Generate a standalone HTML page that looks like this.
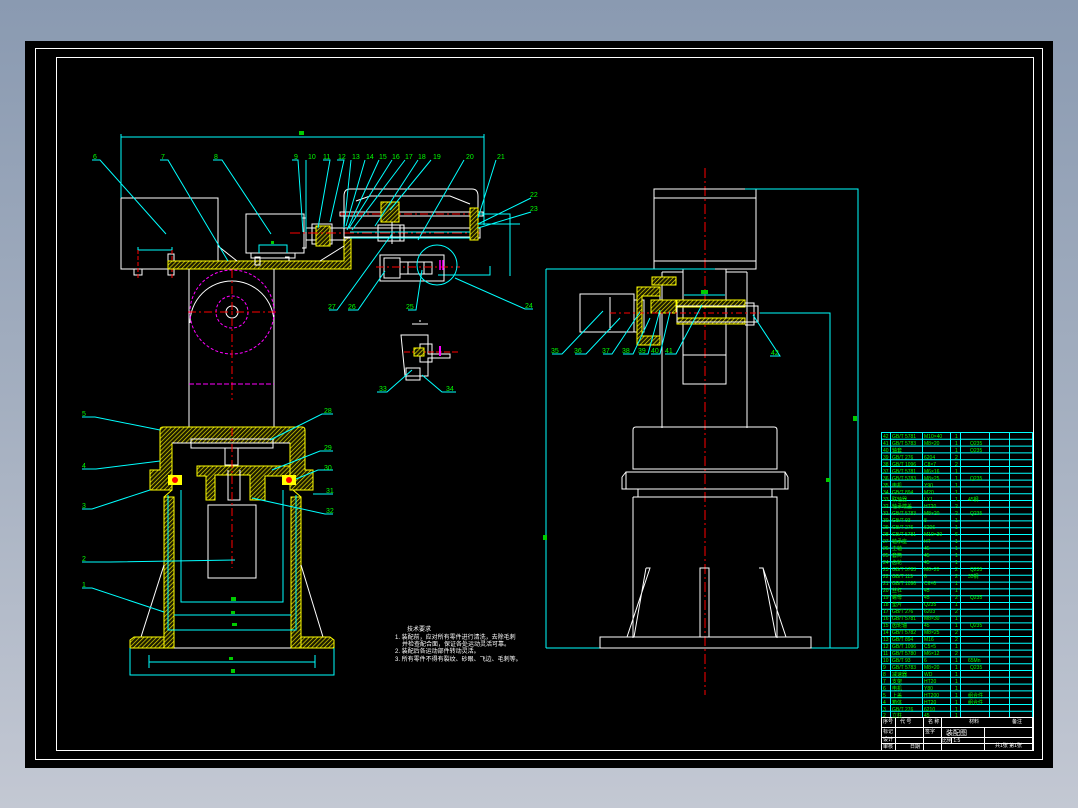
<!DOCTYPE html>
<html><head><meta charset="utf-8"><style>
html,body{margin:0;padding:0;width:1078px;height:808px;overflow:hidden;background:linear-gradient(#8a9ab1,#a4afc0 50%,#c3c8d3);}
svg{position:absolute;left:0;top:0}
text{font-family:"Liberation Sans","Noto Sans CJK SC",sans-serif;}
</style></head><body>
<svg width="1078" height="808" viewBox="0 0 1078 808">
<defs>
<pattern id="h" width="3" height="3" patternUnits="userSpaceOnUse" patternTransform="rotate(45)">
<rect width="3" height="3" fill="#1a1a00"/><line x1="0" y1="0" x2="0" y2="3" stroke="#e8e000" stroke-width="1.4"/></pattern>
</defs>
<rect x="25" y="41" width="1028" height="727" fill="#000"/>
<rect x="35.5" y="48.5" width="1007" height="711" fill="none" stroke="#fff" stroke-width="1"/>
<rect x="56.5" y="57.5" width="977" height="693" fill="none" stroke="#fff" stroke-width="1"/>

<!-- ===== LEFT VIEW ===== -->
<g fill="none" stroke-width="1">
<!-- top dim -->
<path d="M121 137H484 M121 134V265 M484 134V225" stroke="#0ff"/>
<rect x="299" y="131" width="5" height="4" fill="#0c0" stroke="none"/>
<!-- left box -->
<path d="M121 198H218V261 M121 198V269H168" stroke="#fff"/>
<path d="M138 250H172 M138 247V253 M172 247V253" stroke="#0ff"/>
<path d="M134 269v6h8v-6 M168 254h6v21h-6z" stroke="#fff"/>
<path d="M138 250V280 M172 250V280" stroke="#f00" stroke-dasharray="4 2"/>
<!-- plate -->
<path d="M168 261H344V238H351V269H168Z" fill="url(#h)" stroke="#ff0"/>
<path d="M218 246L237 261 M320 261L344 246" stroke="#fff"/>
<!-- motor 8 -->
<path d="M246 214H304V253H246Z M251 253V258H295V253 M255 257h5v8h-5z M285 257h4v4" stroke="#fff"/>
<path d="M259 253V245H287V253" stroke="#0ff"/>
<rect x="271" y="241" width="3" height="3" fill="#0c0" stroke="none"/>
<path d="M304 214V253 M302 218h4v30h-4" stroke="#fff"/>
<!-- coupling & gearbox -->
<path d="M306 228H346 M306 240H346 M312 224h20v20h-20z" stroke="#fff"/>
<rect x="316" y="226" width="14" height="20" fill="url(#h)" stroke="#ff0"/>
<path d="M290 233H480" stroke="#f00" stroke-dasharray="10 3 2 3"/>
<path d="M350 189H472Q478 189 478 196V237H344V196Q344 189 350 189Z" stroke="#fff"/>
<path d="M356 201L370 196H450L470 204 M340 212H483V216H340Z M344 228H480V238H344" stroke="#fff"/>
<path d="M340 214H483" stroke="#f00" stroke-dasharray="8 3 2 3"/>
<rect x="381" y="202" width="18" height="20" fill="url(#h)" stroke="#ff0"/>
<rect x="378" y="225" width="26" height="16" stroke="#fff"/>
<path d="M392 222V244 M400 225v16" stroke="#fff"/>
<rect x="470" y="208" width="8" height="32" fill="url(#h)" stroke="#ff0"/>
<path d="M350 232H470 M350 238H470 M478 214H510V276 M478 224H520 M438 275H490V266" stroke="#0ff"/>
<!-- lower motor -->
<path d="M380 255H444V281H380Z M384 258H400V278H384Z M400 262H432V274H400Z" stroke="#fff"/>
<rect x="408" y="262" width="16" height="12" fill="none" stroke="#fff"/>
<path d="M376 267H460" stroke="#f00" stroke-dasharray="8 3 2 3"/>
<circle cx="437" cy="265" r="20" stroke="#0ff"/>
<path d="M440 260v10 M443 260v10" stroke="#f0f" stroke-width="1.5"/>
<!-- column & wheel -->
<path d="M189 269V427 M274 269V427" stroke="#fff"/>
<path d="M190 323A42 42 0 0 1 274 323" stroke="#fff"/>
<circle cx="232" cy="312" r="42" stroke="#f0f" stroke-dasharray="3 2"/>
<circle cx="232" cy="312" r="16" stroke="#f0f" stroke-dasharray="3 2"/>
<circle cx="232" cy="312" r="6" stroke="#fff"/>
<path d="M188 312H276 M232 270V400" stroke="#f00" stroke-dasharray="8 3 2 3"/>
<path d="M189 384H274" stroke="#f0f" stroke-dasharray="5 2"/>
<!-- lower housing -->
<path d="M160 430Q160 427 163 427H302Q305 427 305 430V470H313V490H290V443H172V490H150V470H160Z" fill="url(#h)" stroke="#ff0"/>
<path d="M172 443H290" stroke="#fff"/>
<path d="M191 439H273V448H191Z M225 448H238V465H225Z" stroke="#fff"/>
<path d="M197 466H290V476H265V500H250V475H215V500H206V476H197Z" fill="url(#h)" stroke="#ff0"/>
<rect x="168" y="475" width="14" height="10" fill="#ff0" stroke="none"/>
<rect x="282" y="475" width="14" height="10" fill="#ff0" stroke="none"/>
<circle cx="175" cy="480" r="3" fill="#f00"/><circle cx="289" cy="480" r="3" fill="#f00"/>
<path d="M164 497H174V648H164Z M291 497H301V648H291Z" fill="url(#h)" stroke="#ff0"/>
<path d="M164 497L172 490 M301 497L293 490" stroke="#ff0"/>
<path d="M208 505H256V578H208Z M228 470V500H240V470" stroke="#fff"/>
<path d="M168 495V630H296V495 M181 490V602H283V490 M174 615H291" stroke="#0ff"/>
<path d="M232 428V568" stroke="#f00" stroke-dasharray="8 3 2 3"/>
<path d="M164 565L141 637 M301 565L323 637" stroke="#fff"/>
<path d="M130 640L134 637H164V648H130Z M301 637H330L334 640V648H301Z" fill="url(#h)" stroke="#ff0"/>
<path d="M174 648H291" stroke="#fff"/>
<path d="M130 648V675H334V648 M149 662H315 M149 655V668 M315 655V668" stroke="#0ff"/>
<rect x="229" y="657" width="4" height="3" fill="#0c0" stroke="none"/>
<rect x="231" y="669" width="4" height="4" fill="#0c0" stroke="none"/>
<rect x="231" y="597" width="5" height="4" fill="#0c0" stroke="none"/>
<rect x="231" y="611" width="4" height="3" fill="#0c0" stroke="none"/>
<rect x="232" y="623" width="5" height="3" fill="#0c0" stroke="none"/>
<!-- leaders lower left -->
<path d="M82 417H95L160 430 M82 469H96L160 461 M82 509H92L150 490 M82 562H110L235 560 M82 588H92L164 612" stroke="#0ff"/>
<path d="M333 414H322L270 440 M333 451H320L272 470 M333 470H318L296 479 M333 494H313 M333 514H325L252 498" stroke="#0ff"/>
<!-- small detail -->
<path d="M401 335H428V354H450V358H428V376H405Z M406 368H420V380H406Z M420 344H432V362H420Z" stroke="#fff"/>
<path d="M404 352H458" stroke="#f00" stroke-dasharray="6 2"/>
<rect x="414" y="348" width="10" height="8" fill="url(#h)" stroke="#ff0"/>
<path d="M440 346v10" stroke="#f0f" stroke-width="2"/>
<path d="M412 324H428 M420 322V320" stroke="#fff"/>
<path d="M377 392H387L412 370 M456 392H442L422 375" stroke="#0ff"/>
<!-- top leaders -->
<path d="M92 160H100L166 234 M160 160H168L228 261 M213 160H222L271 234 M292 160H298L303 232 M306 160V232 M323 160H330L318 228 M337 160H344L330 222 M351 160L344 228 M365 160L346 226 M379 160L347 230 M392 160L349 228 M405 160L352 230 M418 160L375 226 M431 160L390 210 M464 160L418 240 M496 160L478 218 M531 198L478 224 M531 212L478 228 M329 310H337L392 234 M348 310H358L385 271 M408 310H416L422 270 M533 309H525L455 278" stroke="#0ff"/>
</g>
<g fill="#0f0" font-size="7">
<text x="93" y="159">6</text><text x="161" y="159">7</text><text x="214" y="159">8</text><text x="294" y="159">9</text>
<text x="308" y="159">10</text><text x="323" y="159">11</text><text x="338" y="159">12</text><text x="352" y="159">13</text>
<text x="366" y="159">14</text><text x="379" y="159">15</text><text x="392" y="159">16</text><text x="405" y="159">17</text>
<text x="418" y="159">18</text><text x="433" y="159">19</text><text x="466" y="159">20</text><text x="497" y="159">21</text>
<text x="530" y="197">22</text><text x="530" y="211">23</text>
<text x="328" y="309">27</text><text x="348" y="309">26</text><text x="406" y="309">25</text><text x="525" y="308">24</text>
<text x="379" y="391">33</text><text x="446" y="391">34</text>
<text x="82" y="416">5</text><text x="82" y="468">4</text><text x="82" y="508">3</text><text x="82" y="561">2</text><text x="82" y="587">1</text>
<text x="324" y="413">28</text><text x="324" y="450">29</text><text x="324" y="470">30</text><text x="326" y="493">31</text><text x="326" y="513">32</text>
</g>
<g fill="#fff" font-size="6">
<text x="407" y="631">技术要求</text>
<text x="395" y="639">1. 装配前，应对所有零件进行清洗，去除毛刺</text>
<text x="402" y="646">并检查配合面，保证各处运动灵活可靠。</text>
<text x="395" y="653">2. 装配后各运动部件转动灵活。</text>
<text x="395" y="661">3. 所有零件不得有裂纹、砂眼、飞边、毛刺等。</text>
</g>

<!-- ===== RIGHT VIEW ===== -->
<g fill="none" stroke-width="1">
<path d="M705 168V695" stroke="#f00" stroke-dasharray="10 3 2 3"/>
<path d="M654 189H756V269H654Z M654 198H756 M654 261H756" stroke="#fff"/>
<path d="M683 269V384H726V269 M662 272H683 M726 272H747 M662 272V428 M747 272V428 M683 355H726" stroke="#fff"/>
<path d="M745 189H858V648 M760 313H830V648 M546 269H715 M546 269V648 M546 648H858" stroke="#0ff"/>
<path d="M580 294H634V332H580Z M610 297V330 M634 300H644V332H634 M644 289H660V345H644" stroke="#fff"/>
<path d="M637 287H660V296H642V336H660V345H637Z" fill="url(#h)" stroke="#ff0"/>
<path d="M652 277H676V285H652Z" fill="url(#h)" stroke="#ff0"/>
<path d="M651 300H676V313H651Z" fill="url(#h)" stroke="#ff0"/>
<path d="M677 300H745V307H677Z M677 318H745V324H677Z" fill="url(#h)" stroke="#ff0"/>
<path d="M677 306H758V322H677Z M745 303H754V325H745" stroke="#fff"/>
<path d="M610 313H760" stroke="#f00" stroke-dasharray="6 3 2 3"/>
<path d="M684 295H725" stroke="#0ff"/>
<rect x="701" y="290" width="7" height="4" fill="#0c0" stroke="none"/>
<path d="M552 354H562L603 311 M575 354H586L620 318 M603 354H612L640 312 M623 354H633L650 318 M639 354H648L660 310 M651 354H660L670 312 M665 354H676L702 305 M770 356H780L753 315" stroke="#0ff"/>
<path d="M633 430Q633 427 636 427H774Q777 427 777 430V469H633Z M626 472H785V489H626Z M622 477L626 472 M785 472L788 477 M622 477V489H788V477 M633 497H777V638 M633 497V638 M638 489V497 M772 489V497" stroke="#fff"/>
<path d="M600 637H811V648H600Z" stroke="#fff"/>
<path d="M646 568H650L627 637 M646 568L634 637 M759 568H763L786 637 M763 568L776 637 M700 568H709V637H700Z" stroke="#fff"/>
</g>
<g fill="#0f0" font-size="7">
<text x="551" y="353">35</text><text x="574" y="353">36</text><text x="602" y="353">37</text><text x="622" y="353">38</text>
<text x="638" y="353">39</text><text x="651" y="353">40</text><text x="665" y="353">41</text><text x="771" y="355">42</text>
</g>
<rect x="543" y="535" width="4" height="5" fill="#0c0"/><rect x="826" y="478" width="4" height="4" fill="#0c0"/><rect x="853" y="416" width="4" height="5" fill="#0c0"/>

<!-- ===== TABLE ===== -->
<g stroke="#0ff" stroke-width="1" fill="none">
<rect x="881.5" y="432.5" width="151" height="285"/>
<path d="M890.5 432V717 M922.5 432V717 M950.5 432V717 M960.5 432V717 M989.5 432V717 M1009.5 432V717"/>
<path d="M881 439.3H1033 M881 446.1H1033 M881 452.9H1033 M881 459.7H1033 M881 466.5H1033 M881 473.3H1033 M881 480.1H1033 M881 486.9H1033 M881 493.7H1033 M881 500.5H1033 M881 507.3H1033 M881 514.1H1033 M881 520.9H1033 M881 527.7H1033 M881 534.5H1033 M881 541.3H1033 M881 548.1H1033 M881 554.9H1033 M881 561.7H1033 M881 568.5H1033 M881 575.3H1033 M881 582.1H1033 M881 588.9H1033 M881 595.7H1033 M881 602.5H1033 M881 609.3H1033 M881 616.1H1033 M881 622.9H1033 M881 629.7H1033 M881 636.5H1033 M881 643.3H1033 M881 650.1H1033 M881 656.9H1033 M881 663.7H1033 M881 670.5H1033 M881 677.3H1033 M881 684.1H1033 M881 690.9H1033 M881 697.7H1033 M881 704.5H1033 M881 711.3H1033"/>
</g>
<g stroke="#fff" stroke-width="1" fill="none">
<rect x="881.5" y="717.5" width="151" height="33"/>
<path d="M881 727.5H1033 M881 737.5H941 M881 743.5H941 M941 737.5H1033 M941 743.5H1033 M895.5 717V751 M923.5 717V751 M941.5 717V751 M984.5 727V751 M951.5 737V743"/>
</g>
<g fill="#0f0" font-size="5">
<text x="883" y="438">42</text><text x="892" y="438">GB/T 5781</text><text x="924" y="438">M10×40</text><text x="955" y="438">1</text>
<text x="883" y="445">41</text><text x="892" y="445">GB/T 5783</text><text x="924" y="445">M8×20</text><text x="955" y="445">1</text><text x="970" y="445">Q235</text>
<text x="883" y="452">40</text><text x="892" y="452">轴套</text><text x="955" y="452">1</text><text x="970" y="452">Q235</text>
<text x="883" y="459">39</text><text x="892" y="459">GB/T 276</text><text x="924" y="459">6204</text><text x="955" y="459">2</text>
<text x="883" y="466">38</text><text x="892" y="466">GB/T 1096</text><text x="924" y="466">C8×7</text><text x="955" y="466">2</text>
<text x="883" y="473">37</text><text x="892" y="473">GB/T 5781</text><text x="924" y="473">M6×16</text><text x="955" y="473">1</text>
<text x="883" y="480">36</text><text x="892" y="480">GB/T 5783</text><text x="924" y="480">M8×25</text><text x="955" y="480">1</text><text x="970" y="480">Q235</text>
<text x="883" y="487">35</text><text x="892" y="487">电机</text><text x="924" y="487">Y90</text><text x="955" y="487">1</text>
<text x="883" y="494">34</text><text x="892" y="494">GB/T 894</text><text x="924" y="494">M20</text><text x="955" y="494">1</text>
<text x="883" y="501">33</text><text x="892" y="501">联轴器</text><text x="924" y="501">LX1</text><text x="955" y="501">1</text><text x="968" y="501">45钢</text>
<text x="883" y="508">32</text><text x="892" y="508">轴承端盖</text><text x="924" y="508">HT20</text><text x="955" y="508">2</text>
<text x="883" y="515">31</text><text x="892" y="515">GB/T 5783</text><text x="924" y="515">M8×20</text><text x="955" y="515">2</text><text x="970" y="515">Q235</text>
<text x="883" y="522">30</text><text x="892" y="522">GB/T 93</text><text x="924" y="522">8</text><text x="955" y="522">1</text>
<text x="883" y="529">29</text><text x="892" y="529">GB/T 276</text><text x="924" y="529">6206</text><text x="955" y="529">1</text>
<text x="883" y="536">28</text><text x="892" y="536">GB/T 5781</text><text x="924" y="536">M10×30</text><text x="955" y="536">6</text>
<text x="883" y="543">27</text><text x="892" y="543">轴承座</text><text x="924" y="543">HT</text><text x="955" y="543">1</text>
<text x="883" y="550">26</text><text x="892" y="550">主轴</text><text x="924" y="550">45</text><text x="955" y="550">1</text>
<text x="883" y="557">25</text><text x="892" y="557">套筒</text><text x="924" y="557">45</text><text x="955" y="557">1</text>
<text x="883" y="564">24</text><text x="892" y="564">齿轮</text><text x="924" y="564">45</text><text x="955" y="564">1</text>
<text x="883" y="571">23</text><text x="892" y="571">GB/T 5783</text><text x="924" y="571">M6×20</text><text x="955" y="571">2</text><text x="970" y="571">Q235</text>
<text x="883" y="578">22</text><text x="892" y="578">GB/T 119</text><text x="924" y="578">6</text><text x="955" y="578">2</text><text x="968" y="578">35钢</text>
<text x="883" y="585">21</text><text x="892" y="585">GB/T 1096</text><text x="924" y="585">C6×6</text><text x="955" y="585">1</text>
<text x="883" y="592">20</text><text x="892" y="592">丝杠</text><text x="924" y="592">45</text><text x="955" y="592">1</text>
<text x="883" y="599">19</text><text x="892" y="599">螺母</text><text x="924" y="599">45</text><text x="955" y="599">2</text><text x="970" y="599">Q235</text>
<text x="883" y="606">18</text><text x="892" y="606">垫片</text><text x="924" y="606">Q235</text><text x="955" y="606">1</text>
<text x="883" y="613">17</text><text x="892" y="613">GB/T 276</text><text x="924" y="613">6203</text><text x="955" y="613">2</text>
<text x="883" y="620">16</text><text x="892" y="620">GB/T 5781</text><text x="924" y="620">M8×30</text><text x="955" y="620">1</text>
<text x="883" y="627">15</text><text x="892" y="627">齿轮轴</text><text x="924" y="627">45</text><text x="955" y="627">1</text><text x="970" y="627">Q235</text>
<text x="883" y="634">14</text><text x="892" y="634">GB/T 5782</text><text x="924" y="634">M8×25</text><text x="955" y="634">2</text>
<text x="883" y="641">13</text><text x="892" y="641">GB/T 894</text><text x="924" y="641">M16</text><text x="955" y="641">2</text>
<text x="883" y="648">12</text><text x="892" y="648">GB/T 1096</text><text x="924" y="648">C5×5</text><text x="955" y="648">1</text>
<text x="883" y="655">11</text><text x="892" y="655">GB/T 5780</text><text x="924" y="655">M6×12</text><text x="955" y="655">2</text>
<text x="883" y="662">10</text><text x="892" y="662">GB/T 93</text><text x="924" y="662">6</text><text x="955" y="662">1</text><text x="968" y="662">65Mn</text>
<text x="883" y="669">9</text><text x="892" y="669">GB/T 5783</text><text x="924" y="669">M8×20</text><text x="955" y="669">1</text><text x="970" y="669">Q235</text>
<text x="883" y="676">8</text><text x="892" y="676">减速器</text><text x="924" y="676">WD</text><text x="955" y="676">1</text>
<text x="883" y="683">7</text><text x="892" y="683">支架</text><text x="924" y="683">HT20</text><text x="955" y="683">1</text>
<text x="883" y="690">6</text><text x="892" y="690">电机</text><text x="924" y="690">Y80</text><text x="955" y="690">1</text>
<text x="883" y="697">5</text><text x="892" y="697">上盖</text><text x="924" y="697">HT200</text><text x="955" y="697">1</text><text x="968" y="697">组合件</text>
<text x="883" y="704">4</text><text x="892" y="704">箱体</text><text x="924" y="704">HT20</text><text x="955" y="704">1</text><text x="968" y="704">组合件</text>
<text x="883" y="711">3</text><text x="892" y="711">GB/T 276</text><text x="924" y="711">6210</text><text x="955" y="711">1</text>
<text x="883" y="717">2</text><text x="892" y="717">立柱</text><text x="924" y="717">45</text><text x="955" y="717">1</text>
</g>
<g fill="#fff" font-size="5">
<text x="883" y="723">序号</text><text x="900" y="723">代 号</text><text x="928" y="723">名 称</text><text x="969" y="723">材料</text><text x="1012" y="723">备注</text>
<text x="883" y="733">标记</text><text x="925" y="733">签字</text>
<text x="883" y="741">设计</text><text x="883" y="748">审核</text><text x="910" y="748">日期</text>
<text x="946" y="735" font-size="7">装配图</text><text x="942" y="742">比例 1:5</text>
<text x="995" y="747">共1张 第1张</text>
</g>
</svg>
</body></html>
